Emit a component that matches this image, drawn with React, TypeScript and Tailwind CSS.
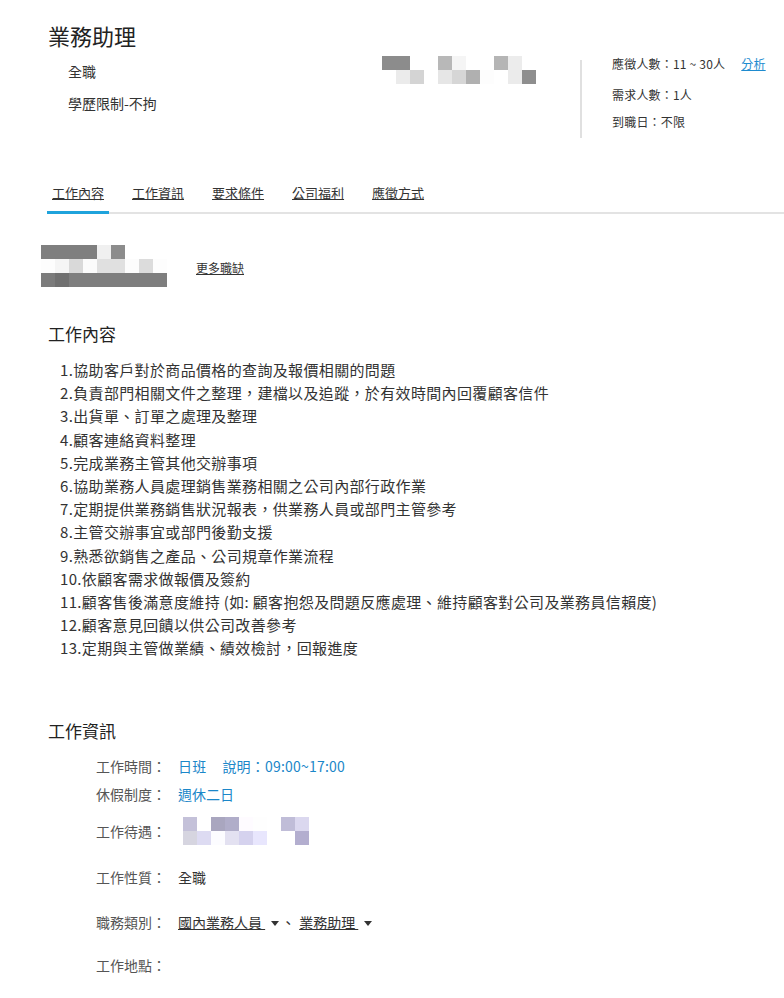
import React from 'react';

type Grid = string[][];

// pixelated (redacted) blocks from the screenshot
const companyMosaic: Grid = [
  ['bg-[#8c8c8c]', 'bg-[#8c8c8c]', 'bg-white', 'bg-white', 'bg-[#b8b8b8]', 'bg-[#f5f5f5]', 'bg-white', 'bg-white', 'bg-[#b5b5b5]', 'bg-[#ececec]', 'bg-white'],
  ['bg-white', 'bg-[#ebebeb]', 'bg-[#d4d4d4]', 'bg-white', 'bg-[#e6e6e6]', 'bg-[#d6d6d6]', 'bg-[#b0b0b0]', 'bg-[#fdfdfd]', 'bg-white', 'bg-[#ebebeb]', 'bg-[#8e8e8e]'],
];

const moreMosaic: Grid = [
  ['bg-[#7f7f7f]', 'bg-[#7f7f7f]', 'bg-[#7f7f7f]', 'bg-[#7f7f7f]', 'bg-[#f0f0f0]', 'bg-[#8c8c8c]', 'bg-white', 'bg-white', 'bg-white'],
  ['bg-[#fdfdfd]', 'bg-[#f5f5f5]', 'bg-[#d9d9d9]', 'bg-[#fbfbfb]', 'bg-[#e0e0e0]', 'bg-[#e0e0e0]', 'bg-[#fcfcfc]', 'bg-[#dcdcdc]', 'bg-[#fdfdfd]'],
  ['bg-[#7b7b7b]', 'bg-[#707070]', 'bg-[#7e7e7e]', 'bg-[#7e7e7e]', 'bg-[#7e7e7e]', 'bg-[#7e7e7e]', 'bg-[#7e7e7e]', 'bg-[#7e7e7e]', 'bg-[#7e7e7e]'],
];

const salaryMosaic: Grid = [
  ['bg-[#c4c1d9]', 'bg-white', 'bg-[#a9a6bf]', 'bg-[#b0adc9]', 'bg-[#fefbff]', 'bg-[#fefefe]', 'bg-white', 'bg-[#c0bdd8]', 'bg-[#dbd8ef]'],
  ['bg-[#d6d5e0]', 'bg-[#dddbf2]', 'bg-[#fcfcff]', 'bg-[#e3e1f1]', 'bg-[#d5d2ee]', 'bg-[#e8e6fd]', 'bg-white', 'bg-white', 'bg-[#b3aecf]'],
];

const Mosaic: React.FC<{ grid: Grid; className?: string }> = ({ grid, className = '' }) => (
  <div className={`flex flex-col ${className}`}>
    {grid.map((row, i) => (
      <div key={i} className="flex">
        {row.map((c, j) => (
          <div key={j} className={`w-[14px] h-[14px] ${c}`} />
        ))}
      </div>
    ))}
  </div>
);

const tabs = ['工作內容', '工作資訊', '要求條件', '公司福利', '應徵方式'];

const duties = [
  '1.協助客戶對於商品價格的查詢及報價相關的問題',
  '2.負責部門相關文件之整理，建檔以及追蹤，於有效時間內回覆顧客信件',
  '3.出貨單、訂單之處理及整理',
  '4.顧客連絡資料整理',
  '5.完成業務主管其他交辦事項',
  '6.協助業務人員處理銷售業務相關之公司內部行政作業',
  '7.定期提供業務銷售狀況報表，供業務人員或部門主管參考',
  '8.主管交辦事宜或部門後勤支援',
  '9.熟悉欲銷售之產品、公司規章作業流程',
  '10.依顧客需求做報價及簽約',
  '11.顧客售後滿意度維持 (如: 顧客抱怨及問題反應處理、維持顧客對公司及業務員信賴度)',
  '12.顧客意見回饋以供公司改善參考',
  '13.定期與主管做業績、績效檢討，回報進度',
];

const Caret = () => (
  <span className="inline-block ml-[6px] align-middle w-0 h-0 border-l-[4px] border-r-[4px] border-t-[5px] border-l-transparent border-r-transparent border-t-[#333]" />
);

const InfoRow: React.FC<{ label: string; className?: string; children: React.ReactNode }> = ({ label, className = '', children }) => (
  <div className={`flex items-center ${className}`}>
    <div className="w-[82px] shrink-0 text-[#555]">{label}：</div>
    <div>{children}</div>
  </div>
);

export default function App() {
  return (
    <div className="w-[784px] min-h-[998px] bg-white text-[#333] overflow-hidden font-['Noto_Sans_CJK_TC','Noto_Sans',sans-serif]">
      {/* header */}
      <div className="flex pt-[20px] pl-[48px]">
        <div className="w-[532px] shrink-0">
          <h1 className="text-[22px] leading-[30px] text-[#222]">業務助理</h1>
          <div className="flex mt-[6px]">
            <div className="w-[334px] shrink-0 pl-[20px] text-[14px] leading-[20px]">
              <div className="mt-[5px]">全職</div>
              <div className="mt-[12px]">學歷限制-不拘</div>
            </div>
            <div>
              <Mosaic grid={companyMosaic} />
            </div>
          </div>
        </div>
        <div className="mt-[40px] h-[78px] w-[2px] shrink-0 bg-[#e0e0e0]" />
        <div className="pl-[30px] mt-[34px] text-[12px] leading-[20px] tracking-[0.2px] whitespace-nowrap">
          <div>
            應徵人數：11 ~ 30人
            <a className="ml-[16px] text-[#1e8bcf] underline">分析</a>
          </div>
          <div className="mt-[11px]">需求人數：1人</div>
          <div className="mt-[7px]">到職日：不限</div>
        </div>
      </div>

      {/* tabs */}
      <div className="mt-[45px] ml-[47px] flex gap-[18px] border-b-2 border-[#e3e3e3]">
        {tabs.map((t, i) => (
          <div key={t} className="relative px-[5px] pb-[9px] text-[13px] leading-[20px] text-[#333]">
            <span className="underline">{t}</span>
            {i === 0 && <div className="absolute left-0 right-0 bottom-[-2px] h-[3px] bg-[#1fa3dc]" />}
          </div>
        ))}
      </div>

      {/* more jobs */}
      <div className="flex mt-[31px] ml-[41px]">
        <Mosaic grid={moreMosaic} />
        <a className="ml-[29px] mt-[15px] text-[12px] leading-[16px] underline text-[#333]">更多職缺</a>
      </div>

      {/* job content */}
      <h2 className="mt-[35px] ml-[48px] text-[17px] leading-[24px] text-[#222]">工作內容</h2>
      <ul className="mt-[12px] ml-[60px] text-[15px] leading-[23.2px] tracking-[0.35px] text-[#333]">
        {duties.map((d) => (
          <li key={d} className="whitespace-nowrap">{d}</li>
        ))}
      </ul>

      {/* job info */}
      <h2 className="mt-[59px] ml-[48px] text-[17px] leading-[24px] text-[#222]">工作資訊</h2>
      <div className="ml-[96px] text-[14px] leading-[20px]">
        <InfoRow label="工作時間" className="mt-[13px]">
          <span className="text-[#1b87c9] tracking-[0.2px]">日班<span className="ml-[16px]">說明：09:00~17:00</span></span>
        </InfoRow>
        <InfoRow label="休假制度" className="mt-[8px]">
          <span className="text-[#1b87c9]">週休二日</span>
        </InfoRow>
        <InfoRow label="工作待遇" className="mt-[13px]">
          <div className="ml-[5px]">
            <Mosaic grid={salaryMosaic} />
          </div>
        </InfoRow>
        <InfoRow label="工作性質" className="mt-[22px]">
          <span>全職</span>
        </InfoRow>
        <InfoRow label="職務類別" className="mt-[25px]">
          <span className="whitespace-nowrap">
            <span className="underline">國內業務人員 </span>
            <Caret />
            <span className="ml-[2px]">、</span>
            <span className="ml-[4px] underline">業務助理 </span>
            <Caret />
          </span>
        </InfoRow>
        <InfoRow label="工作地點" className="mt-[23px]">
          <span />
        </InfoRow>
      </div>
    </div>
  );
}
